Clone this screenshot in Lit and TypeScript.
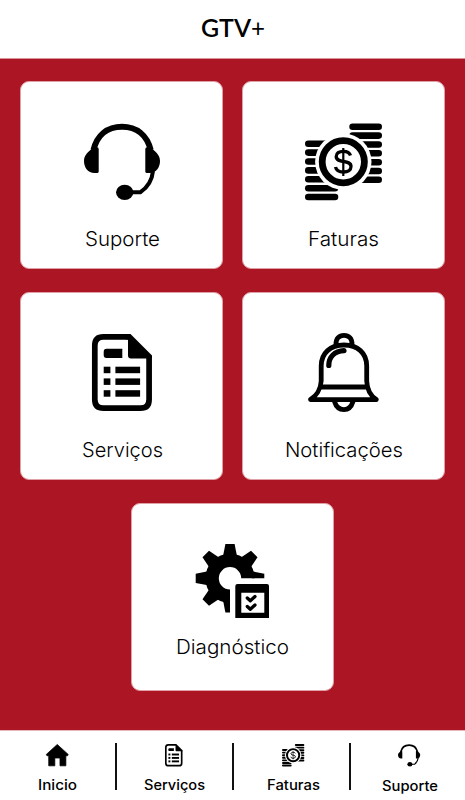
import { LitElement, html, svg, css } from "lit";
import { customElement, property } from "lit/decorators.js";

const leftCoins = [20.7, 29.6, 38.5, 47.4, 56.3, 65.2, 74];
const rightCoins = [3.7, 12.6, 21.5, 30.3, 39.2, 48, 56.8];

const art: Record<string, { w: number; h: number; body: unknown }> = {
  headset: {
    w: 76, h: 77,
    body: svg`
      <path d="M9.5 27C13 12 23.500 3.700 38 3.700S63 12 66.700 27" fill="none" stroke="#000" stroke-width="6"/>
      <path d="M7 26.500Q8 24.300 10.500 24.300H13Q14.700 24.300 14.700 26V48.500Q14.700 50 13 50H10.500C4 50 0 44.500 0 38C0 33 3 30 7 26.500Z"/>
      <path d="M69 26.500Q68 24.300 65.500 24.300H63Q61.300 24.300 61.300 26V48.500Q61.300 50 63 50H65.500C72 50 76 44.500 76 38C76 33 73 30 69 26.500Z"/>
      <path d="M69 48C68 58 64 64 56.500 69.200H42" fill="none" stroke="#000" stroke-width="4"/>
      <ellipse cx="40.700" cy="69.300" rx="8.700" ry="7.600"/>`,
  },
  coins: {
    w: 77, h: 77.5,
    body: svg`
      ${leftCoins.map((y, i) => svg`<rect x="0" y=${y - 3.3} width=${i < 5 ? 26 : 33.3} height="6.600" rx="3.300"/>`)}
      ${rightCoins.map((y, i) => svg`<rect x=${i < 2 ? 44.3 : 51} y=${y - 3.3} width=${i < 2 ? 32.7 : 26} height="6.600" rx="3.300"/>`)}
      <circle cx="38.300" cy="38.700" r="28.200" fill="#fff"/>
      <circle cx="38.300" cy="38.700" r="21.100" fill="none" stroke="#000" stroke-width="6.800"/>
      <path d="M45.500 32.500C44.500 29.500 42 28.300 38.300 28.300C34 28.300 31.200 30.300 31.200 33.500C31.200 41 46 36 46 43.500C46 47 43 49 38.500 49C34 49 31.200 47.300 30.500 44" fill="none" stroke="#000" stroke-width="3.300"/>
      <path d="M38.300 25V53" stroke="#000" stroke-width="2.200"/>`,
  },
  doc: {
    w: 60, h: 77,
    body: svg`
      <path d="M36 2.800H11.500Q2.800 2.800 2.800 11.500V65.500Q2.800 74.200 11.500 74.200H48.500Q57.100 74.200 57.100 65.500V22" fill="none" stroke="#000" stroke-width="5.700"/>
      <path d="M34 0H38.500L60 21.500V24.500H39Q36 24.500 36 21.500V5.500H34Z"/>
      <path d="M14.500 14.700H30.300V24H14.500Q11.700 24 11.700 21V18Q11.700 14.700 14.500 14.700Z"/>
      ${[32.7, 44.4, 56.2].map((y) => svg`<rect x="11.700" y=${y} width="6.700" height="6.500"/><rect x="23.400" y=${y} width="24.700" height="6.500"/>`)}`,
  },
  bell: {
    w: 71, h: 79,
    body: svg`
      <g fill="none" stroke="#000" stroke-width="4.800" stroke-linecap="round" stroke-linejoin="round">
        <path d="M2.500 66.600C8 63 12.800 56 13.200 48V33C13.200 20 22.500 12 36 12S58.700 20 58.700 33V48C59 56 63 63 68.300 66.600Z"/>
        <path d="M13 54H59"/>
        <path d="M28 11C28 5.500 31 2.400 36 2.400S44 5.500 44 11"/>
        <path d="M26.500 68.500C28 73.500 31 76.600 36 76.600S43.500 73.500 45 68.500"/>
        <path d="M20.800 32.500C20.800 24 26.500 18 36 17.700" stroke-width="5.200"/>
      </g>`,
  },
  gear: {
    w: 73, h: 74,
    body: svg`
      <clipPath id="gearCut"><path d="M-1-1H75V34.300H34V75H-1Z"/></clipPath>
      <g clip-path="url(#gearCut)">
        <circle cx="34" cy="34.300" r="17.900" fill="none" stroke="#000" stroke-width="13.400"/>
        ${[0, 45, 90, 180, 225, 270, 315].map((a) => svg`<path d="M-7-22L-4.600-34.300H4.600L7-22Z" transform="translate(34 34.300) rotate(${a})"/>`)}
      </g>
      <path fill-rule="evenodd" d="M41.500 40H71Q73 40 73 42V74H39.300V42.200Q39.300 40 41.500 40ZM45.300 48.700V68.700H68.300V48.700Z"/>
      <path d="M51.300 54L54.300 56.800L59 52.500M51.300 62.500L54.300 65.300L59 61" fill="none" stroke="#000" stroke-width="3.300" stroke-linecap="round" stroke-linejoin="round"/>`,
  },
  home: {
    w: 23, h: 23,
    body: svg`<path d="M11.500 .5L22.700 10.700L22 12H20.300V22.300H14.300V14.300H9V22.300H2.800V12H1L.3 10.700Z" stroke="#000" stroke-width=".8" stroke-linejoin="round"/>`,
  },
};

@customElement("app-icon")
class AppIcon extends LitElement {
  @property() name = "doc";
  @property({ type: Number }) size = 0;
  static styles = css`
    :host { display: block; flex: none; }
    svg { display: block; overflow: visible; }
  `;
  render() {
    const { w, h, body } = art[this.name];
    const k = this.size ? this.size / h : 1;
    return html`<svg width=${w * k} height=${h * k} viewBox="0 0 ${w} ${h}" aria-hidden="true">${body}</svg>`;
  }
}

@customElement("fitted-text")
class FittedText extends LitElement {
  @property() text = "";
  @property({ type: Number }) width = 50;
  static styles = css`
    :host { display: block; flex: none; height: 1.4em; font-variant-ligatures: none; }
    svg { display: block; overflow: visible; height: 1.4em; }
  `;
  render() {
    return html`<svg width=${this.width}><text x="0" y="1em" fill="currentColor" textLength=${this.width} lengthAdjust="spacingAndGlyphs">${this.text}</text></svg>`;
  }
}

const cards = [
  { icon: "headset", text: "Suporte", width: 75 },
  { icon: "coins", text: "Faturas", width: 71 },
  { icon: "doc", text: "Serviços", width: 81 },
  { icon: "bell", text: "Notificações", width: 118 },
  { icon: "gear", text: "Diagnóstico", width: 113 },
];
const tabs = [
  { icon: "home", text: "Inicio", width: 39 },
  { icon: "doc", text: "Serviços", width: 61 },
  { icon: "coins", text: "Faturas", width: 53 },
  { icon: "headset", text: "Suporte", width: 56 },
];

@customElement("app-root")
class AppRoot extends LitElement {
  static styles = css`
    :host {
      display: flex; flex-direction: column; width: 465px; height: 800px; overflow: hidden;
      box-sizing: border-box; background: #fff; color: #000;
      font-family: Inter, sans-serif;
    }
    * { box-sizing: border-box; }
    header { height: 59px; flex: none; display: flex; justify-content: center; padding-top: 12px; border-bottom: 1px solid #dc9299; }
    .title { font-family: Lato, sans-serif; font-size: 24.500px; font-weight: 600; }
    .plus { font-family: Lato, sans-serif; font-size: 25px; font-weight: 400; }
    main {
      height: 671px; flex: none; background: #ac1624; display: flex; flex-wrap: wrap;
      justify-content: center; align-content: flex-start; gap: 23px 19px; padding-top: 21.500px;
    }
    .card {
      width: 203px; height: 188px; background: #fff; border: 1px solid #dfa0a6; border-radius: 9px;
      display: flex; flex-direction: column; align-items: center; padding-top: 41.500px;
    }
    .art { height: 78px; }
    .caption { font-weight: 340; font-size: 20px; margin: 24.500px 0 0; }
    .headset .caption, .doc .caption { margin-left: 2px; }
    .doc .caption, .bell .caption { margin-top: 25px; }
    .gear .art { margin-top: -1px; }
    .gear .caption { margin-top: 12px; }
    .bell .art { margin-top: -1px; height: 79px; }
    nav { height: 70px; flex: none; display: flex; border-top: 1px solid #e8b6ba; }
    .tab { width: 117px; flex: none; display: flex; flex-direction: column; align-items: center; padding-top: 13px; position: relative; }
    .tab:first-child { width: 116px; }
    .tab + .tab::before { content: ""; position: absolute; left: -1px; top: 12px; width: 1.500px; height: 47px; background: #111; }
    .tab .art { height: 23px; }
    .tabtext { font-size: 14px; font-weight: 500; margin-top: 9px; }
    .t0 { padding-right: 2px; }
    .t1 { padding-right: 2px; }
    .t1 .tabtext { margin-left: 2px; }
    .t2 { padding-left: 3px; }
    .t3 { padding-left: 1px; }
    .t3 .tabtext { margin: 10px 0 0 1px; }
  `;
  render() {
    return html`
      <header>
        <fitted-text class="title" text="GTV" .width=${50}></fitted-text>
        <fitted-text class="plus" text="+" .width=${14}></fitted-text>
      </header>
      <main>
        ${cards.map((c) => html`<section class="card ${c.icon}">
          <div class="art"><app-icon name=${c.icon}></app-icon></div>
          <fitted-text class="caption" text=${c.text} .width=${c.width}></fitted-text>
        </section>`)}
      </main>
      <nav>
        ${tabs.map((t, i) => html`<div class="tab t${i}">
          <div class="art"><app-icon name=${t.icon} .size=${22.5}></app-icon></div>
          <fitted-text class="tabtext" text=${t.text} .width=${t.width}></fitted-text>
        </div>`)}
      </nav>`;
  }
}
